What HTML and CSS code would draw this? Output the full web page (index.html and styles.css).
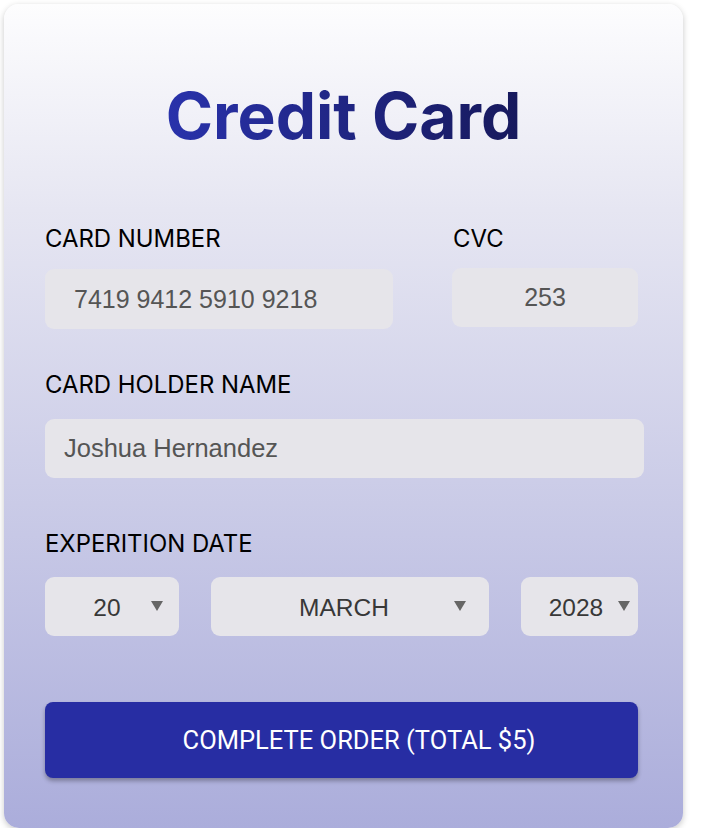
FILE: index.html
```html
<!DOCTYPE html>
<html lang="en">
<head>
<meta charset="utf-8">
<title>Credit Card</title>
<link rel="stylesheet" href="styles.css">
</head>
<body>
<div class="card">
  <h1 class="title">Credit Card</h1>
  <div class="row row-top">
    <div class="field field-number">
      <label class="label">CARD NUMBER</label>
      <div class="input input-number">7419 9412 5910 9218</div>
    </div>
    <div class="field field-cvc">
      <label class="label">CVC</label>
      <div class="input input-cvc">253</div>
    </div>
  </div>
  <div class="field field-holder">
    <label class="label">CARD HOLDER NAME</label>
    <div class="input input-holder">Joshua Hernandez</div>
  </div>
  <div class="field field-date">
    <label class="label">EXPERITION DATE</label>
    <div class="selects">
      <div class="select select-day"><span class="select-value">20</span><svg class="arrow" viewBox="0 0 12 10"><polygon points="0,0 12,0 6,10"/></svg></div>
      <div class="select select-month"><span class="select-value">MARCH</span><svg class="arrow" viewBox="0 0 12 10"><polygon points="0,0 12,0 6,10"/></svg></div>
      <div class="select select-year"><span class="select-value">2028</span><svg class="arrow" viewBox="0 0 12 10"><polygon points="0,0 12,0 6,10"/></svg></div>
    </div>
  </div>
  <button class="submit">COMPLETE ORDER (TOTAL $5)</button>
</div>
</body>
</html>
```

FILE: styles.css
```css
* { box-sizing: border-box; }
html, body { margin: 0; padding: 0; background: #ffffff; }
body { padding: 4px 0 0 4px; }

.card {
  width: 679px;
  height: 824px;
  padding: 80px 41px 0 41px;
  border-radius: 15px;
  background: linear-gradient(180deg, #fdfdfe 0%, #e6e6f2 25%, #abaddb 100%);
  box-shadow: 0 2px 6px rgba(0, 0, 0, 0.22);
  display: flex;
  flex-direction: column;
}

.title {
  margin: 0;
  font-family: "Inter", sans-serif;
  font-weight: 700;
  font-size: 64px;
  line-height: 64px;
  text-align: center;
  background: linear-gradient(90deg, #2932ab 0%, #17195c 100%);
  -webkit-background-clip: text;
  background-clip: text;
  color: transparent;
  align-self: center;
}

.label {
  display: block;
  font-family: "Inter", sans-serif;
  font-size: 23.9px;
  line-height: 24px;
  color: #000;
}

.row-top {
  display: flex;
  gap: 59px;
  margin-top: 79px;
}
.field-number { width: 348px; }
.field-cvc { width: 186px; }
.field-number .input { margin-top: 18px; }
.field-cvc .input { margin-top: 17px; height: 59px; }
.field-cvc .label { padding-left: 1px; }

.input {
  height: 60px;
  border-radius: 9px;
  background: #e6e5ea;
  font-family: "Liberation Sans", Arial, sans-serif;
  font-size: 25px;
  color: #555;
  display: flex;
  align-items: center;
}
.input-number { padding-left: 29px; }
.input-cvc { justify-content: center; }

.field-holder { margin-top: 44px; width: 599px; }
.field-holder .input { margin-top: 22px; height: 59px; padding-left: 19px; font-size: 25.5px; }

.field-date { margin-top: 54px; width: 593px; }
.selects {
  margin-top: 21px;
  display: flex;
  gap: 32px;
}
.select {
  height: 59px;
  padding-top: 3px;
  border-radius: 9px;
  background: #e6e5ea;
  display: flex;
  align-items: center;
  font-family: "Liberation Sans", Arial, sans-serif;
  font-size: 24.5px;
  color: #383838;
}
.select-value { flex: 1; text-align: center; }
.arrow { width: 12px; height: 10px; fill: #666; flex: none; margin-top: -4px; }
.select-day { width: 134px; padding-left: 18px; padding-right: 16px; }
.select-month { width: 278px; padding-left: 23px; padding-right: 23px; }
.select-year { width: 117px; padding-left: 13px; padding-right: 8px; margin-left: auto; }

.submit {
  margin-top: 66px;
  width: 593px;
  height: 76px;
  border: none;
  border-radius: 8px;
  background: #272da3;
  color: #fff;
  font-family: "Roboto", sans-serif;
  font-size: 25.5px;
  padding: 0 0 0 35px;
  box-shadow: 0 3px 4px rgba(0, 0, 0, 0.3);
}
```
